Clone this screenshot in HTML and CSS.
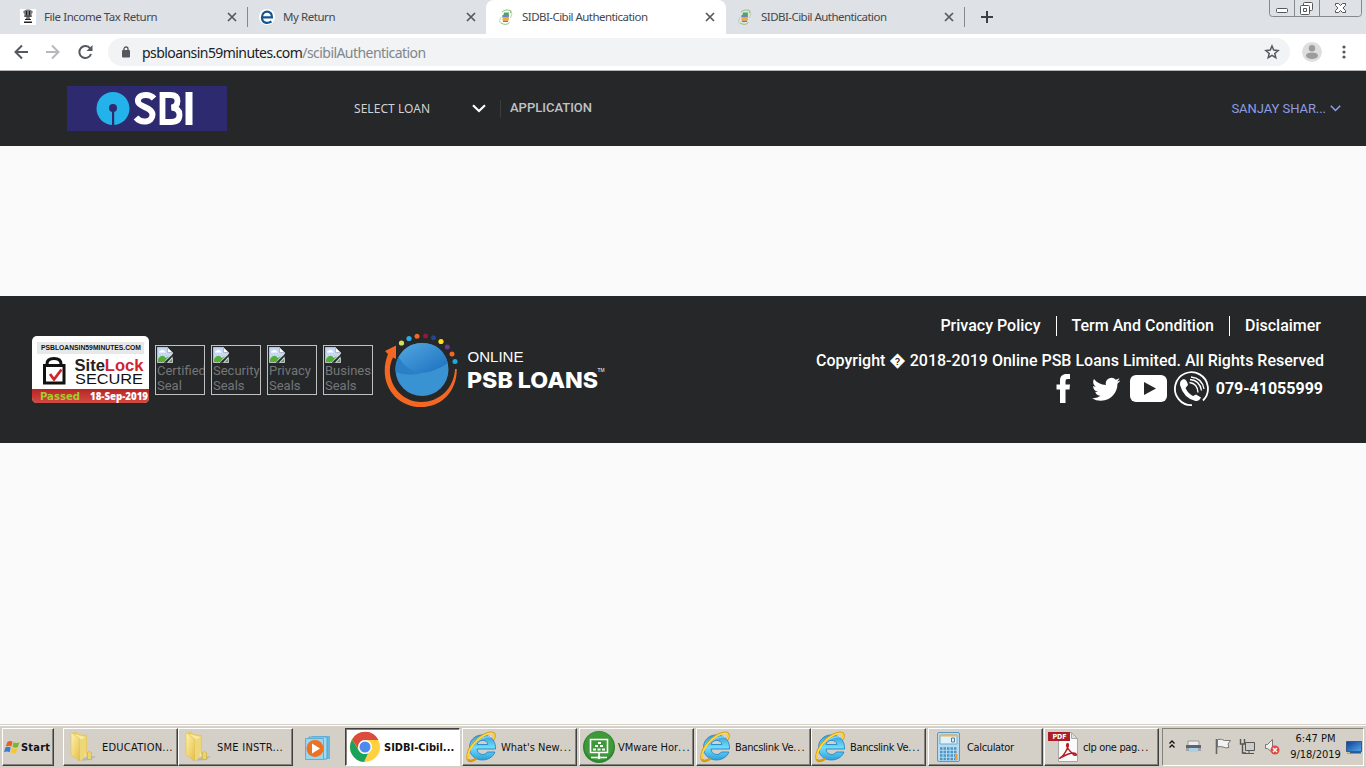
FILE: index.html
```html
<!DOCTYPE html>
<html lang="en">
<head>
<meta charset="utf-8">
<title>SIDBI-Cibil Authentication</title>
<link rel="stylesheet" href="styles.css">
</head>
<body>
<svg class="defs" width="0" height="0">
  <defs>
    <linearGradient id="folderGrad" x1="0" y1="0" x2="1" y2="1"><stop offset="0" stop-color="#fff3a8"/><stop offset="1" stop-color="#e3bd4b"/></linearGradient>
    <linearGradient id="ieGrad" x1="0" y1="0" x2="0" y2="1"><stop offset="0" stop-color="#2f9bd8"/><stop offset=".5" stop-color="#72dcfb"/><stop offset="1" stop-color="#2ba2dd"/></linearGradient>
    <linearGradient id="redGrad" x1="0" y1="0" x2="0" y2="1"><stop offset="0" stop-color="#b92625"/><stop offset="1" stop-color="#d14a42"/></linearGradient>
    <linearGradient id="blueGrad" x1="0" y1="0" x2="1" y2="1"><stop offset="0" stop-color="#53a8e2"/><stop offset="1" stop-color="#1b6fbd"/></linearGradient>
    <linearGradient id="screenGrad" x1="0" y1="0" x2="1" y2="1"><stop offset="0" stop-color="#0c3f94"/><stop offset="1" stop-color="#55a8ea"/></linearGradient>
    <symbol id="close" viewBox="0 0 10 10"><path d="M1 1l8 8M9 1L1 9" stroke="#55585c" stroke-width="1.700" fill="none"/></symbol>
    <symbol id="sidbi" viewBox="0 0 16 16">
      <path d="M4 3Q7 0 12.500 1.500L12.500 4M11.500 13.500Q8 17 3 14" fill="none" stroke="#8fc079" stroke-width="1"/>
      <path d="M3.500 8Q0 12 3 14.500M13 1.500Q15 5 12.500 9" fill="none" stroke="#b9d8a8" stroke-width="1"/>
      <path d="M6 3.500h5l-.3 2.500H5.500z" fill="#4ea469"/><path d="M4.500 6h6.500l-.2 2H4.200z" fill="#6b86bd"/><path d="M4.500 8H11l-.3 3.700H4.500z" fill="#f4ab34"/><path d="M5 11.700h5v1.300H5z" fill="#6c7db5"/>
    </symbol>
    <symbol id="broken" viewBox="0 0 16 16">
      <path d="M.5.5h10l5 5v10H.500z" fill="#c4d8f5"/><path d="M2 5.500q0-2 2-2 1-1.500 2.500 0 2 0 2 2z" fill="#fff"/>
      <path d="M1 15v-3q4-6 8-1l3-2-5 6z" fill="#55ad36"/><path d="M7 15.500L16 7v2l-6 6.500z" fill="#252729"/><path d="M11 15.500l5-4.500v4.500z" fill="#55ad36"/>
      <path d="M.5 15.500V.5h10l5 5V7M7 15.500H.500M15.500 11v4.500h-5" fill="none" stroke="#bcbec0"/><path d="M10.500.5v5h5z" fill="#fff" stroke="#b6b8ba"/>
    </symbol>
    <symbol id="folder" viewBox="0 0 32 32">
      <path d="M20 26l9-1-5 4-14 1z" fill="#8d887d" opacity=".35"/>
      <path d="M5 2l4-1.500 2 2.500 9 1v20l-8 4-7-3z" fill="#e6c962"/><path d="M7 3l12 3v19H9z" fill="#f8e9a1"/>
      <path d="M4 1.500L13 8v22L4 24z" fill="url(#folderGrad)" stroke="#dfbd56" stroke-width=".6"/><path d="M13 9l6-3v15l-3 7-3 2z" fill="#eed779"/><path d="M20.500 21.500q2-2 4 0v7h-4z" fill="#edd36b" stroke="#cfa939" stroke-width=".6"/>
    </symbol>
    <symbol id="ie" viewBox="0 0 32 32">
      <path d="M29.500 18H11c.4 6 8 7.200 10.300 3h7.600C25 32.500 3.500 32 3.500 16.500 3.500-.5 30.500-.5 29.500 18zM11.200 13.500h10.700c-.6-5.500-9.800-5.500-10.700 0z" fill="url(#ieGrad)" stroke="#2587c5" stroke-width=".9"/>
      <path d="M7 13C12 9 18 5 25 6" stroke="#b9f0ff" stroke-width="1.500" fill="none" opacity=".6"/>
      <path d="M27.500 8.500C32-2 20.500 1 11.500 8.500 3 16 .5 24 2 28.500c1 2.500 5 1.500 8.500-1" fill="none" stroke="#d79c17" stroke-width="2.600"/>
      <path d="M27.500 8C31-1 20.500 1.500 11.700 8.700 3.500 16 1 24 2.300 28" fill="none" stroke="#ffdc48" stroke-width="1.500"/>
    </symbol>
  </defs>
</svg>

<header class="tabstrip">
  <div class="tab">
    <svg class="favicon" viewBox="0 0 16 16"><path d="M0 0h16v16H0z" fill="#fff"/><path d="M4 2q1-2 4-1.500Q11 0 12 2l1 1-1.500 2 .5 3H9.500l1 2.500h-5l1-2.500H4l.5-3L3 3z" fill="#777"/><path d="M6 2h1v4H6zM9 2h1v4H9zM5 10h6v1H5zM4 12.500h8V14H4z" fill="#222"/><path d="M5 7h6" stroke="#333"/></svg>
    <span class="tab-title">File Income Tax Return</span><svg class="close"><use href="#close"/></svg>
  </div>
  <div class="tab">
    <svg class="favicon" viewBox="0 0 16 16"><circle cx="8" cy="8" r="8" fill="#fff"/><path d="M3 8.300h10C13.500 1 3 .5 3 8.300c0 6.700 6 6.200 9.500 4.200" fill="none" stroke="#14568e" stroke-width="2.200"/></svg>
    <span class="tab-title">My Return</span><svg class="close"><use href="#close"/></svg>
  </div>
  <div class="tab tab-active">
    <svg class="favicon"><use href="#sidbi"/></svg>
    <span class="tab-title tight">SIDBI-Cibil Authentication</span><svg class="close"><use href="#close"/></svg>
  </div>
  <div class="tab tab-last">
    <svg class="favicon"><use href="#sidbi"/></svg>
    <span class="tab-title tight">SIDBI-Cibil Authentication</span><svg class="close"><use href="#close"/></svg>
  </div>
  <svg class="newtab" viewBox="0 0 12 12"><path d="M6 0v12M0 6h12" stroke="#3c4043" stroke-width="2"/></svg>
  <svg class="wincontrols" width="94" height="18" viewBox="0 0 94 18">
    <path d="M.5 0v13.500q0 3 3 3h86q3 0 3-3V0M25.500 0v16.500M50.500 0v16.500" fill="none" stroke="#85898d"/>
    <g fill="#fff" stroke="#55585b"><rect x="7.500" y="8.500" width="11" height="4" rx="1"/><rect x="34.500" y="2.500" width="9" height="8" rx="1"/><rect x="31.500" y="5.500" width="9" height="9" rx="1"/><path d="M34.500 8.500h3v3h-3z"/>
    <path d="M66.500 3.500h3l2 2 2-2h3v2l-2.500 2.500 2.500 2.500v2h-3l-2-2-2 2h-3v-2L69 8l-2.500-2.500z"/></g>
  </svg>
</header>

<div class="toolbar">
  <svg class="nav" width="80" height="20" viewBox="0 0 80 20" fill="none" stroke-width="2">
    <path d="M14 10H1.500M8 3.500L1.500 10 8 16.500" stroke="#55585c"/><path d="M32 10h12.500M38 3.500l6.500 6.500-6.500 6.500" stroke="#b6b8bb"/>
    <path d="M76.200 6.500A6 6 0 1 0 77 12" stroke="#55585c"/><path d="M78.500 3v6h-6z" fill="#55585c"/>
  </svg>
  <div class="omnibox">
    <svg class="lock" width="8" height="12" viewBox="0 0 8 12"><rect y="4" width="8" height="7.500" rx="1" fill="#55585c"/><path d="M2 4.500V3a2 2 0 0 1 4 0v1.500" fill="none" stroke="#55585c" stroke-width="1.300"/></svg>
    <span class="url">psbloansin59minutes.com<span class="path">/scibilAuthentication</span></span>
    <svg class="star" width="16" height="16" viewBox="0 0 16 16"><path d="M8 2l1.700 4.100 4.400.4-3.300 2.900 1 4.300L8 11.400l-3.800 2.300 1-4.300L1.900 6.500l4.400-.4z" fill="none" stroke="#55585c" stroke-width="1.500"/></svg>
  </div>
  <svg class="avatar" width="20" height="20" viewBox="0 0 20 20"><circle cx="10" cy="10" r="10" fill="#dedede"/><circle cx="10" cy="6.200" r="3.200" fill="#9c9c9c"/><ellipse cx="10" cy="13.700" rx="6" ry="3.300" fill="#9c9c9c"/></svg>
  <svg class="dots" width="4" height="14" viewBox="0 0 4 14" fill="#55585c"><circle cx="2" cy="2" r="1.600"/><circle cx="2" cy="7" r="1.600"/><circle cx="2" cy="12" r="1.600"/></svg>
</div>

<nav class="sitebar">
  <svg class="sbi" width="160" height="45" viewBox="0 0 160 45">
    <path d="M0 0h160v45H0z" fill="#2d2a70"/><circle cx="46" cy="22.500" r="16.500" fill="#23b3ea"/><circle cx="46" cy="22" r="4" fill="#2d2a70"/><path d="M45 24h2.200v16H45z" fill="#2d2a70"/>
    <g fill="none" stroke="#fff"><path d="M87 12.500Q84 9 79 9c-6 0-8.500 3-8 6.500.5 5.500 14.500 6 14.500 13 0 8.500-11.500 9-16.500 3" stroke-width="6"/><path d="M95.500 9h8q7 0 7 6 0 5.500-6 6.500 8 .5 8 7.500T104 36h-8.500z" stroke-width="5.800"/><path d="M122 6v33" stroke-width="7"/></g>
  </svg>
  <span class="select-loan">SELECT LOAN</span>
  <svg class="chev" width="14" height="9" viewBox="0 0 14 9"><path d="M1 1.300l6 5.700 6-5.700" fill="none" stroke="#fff" stroke-width="2.200"/></svg>
  <span class="application">APPLICATION</span>
  <span class="user">SANJAY SHAR...</span>
  <svg width="11" height="7" viewBox="0 0 11 7"><path d="M.8.800l4.700 4.700L10.200.8" fill="none" stroke="#93a0e4" stroke-width="1.500"/></svg>
</nav>

<main class="gap"></main>

<footer class="footer">
  <div class="seals">
    <svg width="117" height="67" viewBox="0 0 117 67">
      <rect width="117" height="67" rx="5" fill="#fff"/><path d="M5 6h107v12H5z" fill="#e8e8e8"/>
      <text class="seal-site" x="9" y="13.500" textLength="100" lengthAdjust="spacingAndGlyphs">PSBLOANSIN59MINUTES.COM</text>
      <path d="M15 30v-2q0-5.500 7-5.500t7 5.500v2" fill="none" stroke="#111" stroke-width="3"/><rect x="12.500" y="29.500" width="19.500" height="17.500" fill="#fff" stroke="#111" stroke-width="3"/><path d="M18 38l4 5.500 7.500-10" fill="none" stroke="#d3232b" stroke-width="2.800"/>
      <text class="seal-name" x="42.500" y="34.500" textLength="69" lengthAdjust="spacingAndGlyphs">Site<tspan fill="#cf2630">Lock</tspan></text>
      <text class="seal-secure" x="43" y="48" textLength="68" lengthAdjust="spacingAndGlyphs">SECURE</text>
      <path d="M0 53h117v9q0 5-5 5H5q-5 0-5-5z" fill="url(#redGrad)"/>
      <text class="seal-passed" x="8" y="64" textLength="40" lengthAdjust="spacingAndGlyphs">Passed</text><text class="seal-date" x="58" y="64" textLength="58" lengthAdjust="spacingAndGlyphs">18-Sep-2019</text>
    </svg>
    <div class="missing"><svg><use href="#broken"/></svg><span>Certified Seal</span></div>
    <div class="missing"><svg><use href="#broken"/></svg><span>Security Seals</span></div>
    <div class="missing"><svg><use href="#broken"/></svg><span>Privacy Seals</span></div>
    <div class="missing"><svg><use href="#broken"/></svg><span>Business Seals</span></div>
    <svg class="psb" width="226" height="76" viewBox="-1 0 226 76">
      <circle cx="38" cy="36.500" r="26.500" fill="#3993d3"/><path d="M14 25Q22 10 38 10q20 0 26 20-14 10-30 10Q16 36 14 25z" fill="url(#blueGrad)"/><path d="M14.500 24q9 15 24 16-15 4-27-1-1-8 3-15z" fill="#2b80c5"/>
      <path d="M1 18L12 12.500l0 13.500-3-1.500C-1 44 14 69 37 69c18 0 33-13 34-33l1.800 0C73 58 58 74 37 74 11 74-7 49 4 21z" fill="#f26722"/>
      <circle cx="17.500" cy="10" r="2.600" fill="#d4e156"/><circle cx="25" cy="5.500" r="2.600" fill="#2caae2"/><circle cx="33" cy="3.200" r="2.500" fill="#f26722"/><circle cx="41.500" cy="3" r="2.500" fill="#8f1942"/><circle cx="49.500" cy="4.800" r="2.500" fill="#21478f"/><circle cx="57" cy="8.500" r="2.600" fill="#ffdd1a"/><circle cx="63.300" cy="14" r="2.500" fill="#653995"/><circle cx="68" cy="21" r="2.500" fill="#f26722"/><circle cx="71" cy="28.500" r="2.500" fill="#20a9e0"/>
      <text class="psb-online" x="83.500" y="28.500" textLength="56" lengthAdjust="spacingAndGlyphs">ONLINE</text><text class="psb-name" x="83" y="54.500" textLength="131" lengthAdjust="spacingAndGlyphs">PSB LOANS</text><text class="psb-tm" x="213.500" y="38.500" textLength="7" lengthAdjust="spacingAndGlyphs">TM</text>
    </svg>
  </div>
  <div class="legal">
    <div class="links"><span>Privacy Policy</span><span>Term And Condition</span><span>Disclaimer</span></div>
    <div class="copyright">Copyright &#xFFFD; 2018-2019 Online PSB Loans Limited. All Rights Reserved</div>
    <div class="social">
      <svg width="154" height="36" viewBox="0 0 154 36" fill="#fff">
        <path d="M4 32V18.500H.5v-5H4V10c0-5 2.500-7 6.500-7H14v5h-2.500Q9.500 8 9.500 10v3.500H14l-.5 5h-4V32z"/>
        <path transform="translate(36 4.200) scale(1.180)" d="M23.950 4.570a10 10 0 0 1-2.820.770 4.950 4.950 0 0 0 2.160-2.720c-.95.550-2 .950-3.130 1.180a4.920 4.920 0 0 0-8.380 4.480C7.690 8.090 4.070 6.130 1.640 3.160a4.920 4.920 0 0 0 1.520 6.570 4.900 4.900 0 0 1-2.230-.61v.06a4.920 4.920 0 0 0 3.950 4.830 5 5 0 0 1-2.210.08 4.940 4.940 0 0 0 4.600 3.420A9.870 9.870 0 0 1 0 19.540a13.990 13.990 0 0 0 7.550 2.210c9.050 0 14-7.500 14-13.980l-.02-.63a9.900 9.900 0 0 0 2.420-2.570z"/>
        <rect x="74" y="4" width="37" height="27" rx="6"/><path d="M88 11l12 6.500L88 24z" fill="#252729"/>
        <path d="M136 34.200A16.500 16.500 0 1 1 147 29.500" fill="none" stroke="#fff" stroke-width="1.800"/>
        <path d="M128 8q3 1 4 6l-2.500 3q2.500 5.500 7.500 8l3-1.500 5 3q-2 4-5.500 3.500-12-3-15.500-16-.5-5 4-6z"/><path d="M133.500 11.500q8 1 8.500 10M134 8.500q10 1 11.500 11M135 6q11 1 13 12" fill="none" stroke="#fff" stroke-width="1.300"/>
      </svg>
      <span class="phone">079-41055999</span>
    </div>
  </div>
</footer>

<section class="blank"></section>

<div class="taskbar">
  <div class="start"><svg width="16" height="15" viewBox="0 0 15 14"><path d="M3 2q2.500-2 5-.5L7 6Q4.500 4.500 1.700 6z" fill="#ee5b26"/><path d="M9 2q2.500 1.500 5.500 0L13 6.500q-2.500 1.500-5-.2z" fill="#78b929"/><path d="M1.300 7q2.500-1.500 5 0l-1 4.500Q3 10 0 11.500z" fill="#397fc8"/><path d="M7.500 7.500q2.500 1.500 5.200 0l-1.300 4.500q-2.500 1.500-5-.2z" fill="#f7c72d"/></svg><span>Start</span></div>
  <div class="task first"><svg><use href="#folder"/></svg><span class="folder-label">EDUCATION...</span></div>
  <div class="task snug"><svg><use href="#folder"/></svg><span class="folder-label">SME INSTR...</span></div>
  <svg class="player" width="29" height="27" viewBox="0 0 29 27"><path d="M7 1h18v23H7z" fill="#68b8df"/><path d="M4 2h18v22H4z" fill="#a5d9ef" stroke="#55a5cf"/><path d="M.5 3.500h18v21H.5z" fill="#9bd4ef" stroke="#67acd1"/><circle cx="10" cy="13.500" r="8.500" fill="#ee7021"/><path d="M7 8.500l8 5-8 5z" fill="#fff"/></svg>
  <div class="task current"><svg viewBox="0 0 32 32"><circle cx="16" cy="16" r="15" fill="#ffd13e"/><path d="M3 8.500A15 15 0 0 1 29.500 9H16a7 7 0 0 0-6 10z" fill="#dd4b3e"/><path d="M3 8.500l6.800 11A7 7 0 0 0 19 22.300l-4 8.700A15 15 0 0 1 3 8.500z" fill="#1aa35f"/><circle cx="16" cy="16" r="7" fill="#fff"/><circle cx="16" cy="16" r="5.500" fill="#4c89f1"/></svg><span>SIDBI-Cibil...</span></div>
  <div class="task"><svg><use href="#ie"/></svg><span>What's New<i>...</i></span></div>
  <div class="task"><svg viewBox="0 0 32 32"><circle cx="16" cy="16" r="16" fill="#2f8532"/><circle cx="16" cy="15" r="14.500" fill="#3f983a"/><path d="M7.500 8.500h17v13h-17zM16 22v4M8 26.500h6M18 26.500h6" fill="none" stroke="#fff" stroke-width="1.600"/><circle cx="16" cy="26.500" r="1.800" fill="#fff"/><path d="M15 11h3v2h-3zM12 14h3v2h-3zM17 14h3v2h-3zM10 17.500h3v2h-3zM14.500 17.500h3v2h-3zM19 17.500h3v2h-3z" fill="#fff"/></svg><span>VMware Hor<i>...</i></span></div>
  <div class="task"><svg><use href="#ie"/></svg><span class="narrow">Bancslink Ve<i>...</i></span></div>
  <div class="task snug"><svg><use href="#ie"/></svg><span class="narrow">Bancslink Ve<i>...</i></span></div>
  <div class="task"><svg viewBox="0 0 32 32"><rect x="5.500" y="1.500" width="22" height="29" rx="1.500" fill="#b5dbf0" stroke="#579cc9"/><path d="M8 4h17v9H8z" fill="#dff2fb" stroke="#73a9c8"/><path d="M8 3.500h17v2H8z" fill="#f3b34f"/><path d="M19.500 7h3v4h-3z" fill="none" stroke="#537c9b"/><path d="M8 17.500h17M8 21h17M8 24.500h17M8 28h17" stroke="#4e94c5" stroke-width="2.300" stroke-dasharray="2.500 1"/><path d="M23 23h2.500v6H23z" fill="#f49a32"/></svg><span class="narrow">Calculator</span></div>
  <div class="task pdf"><svg viewBox="0 0 32 32"><path d="M10.500 1.500h13l6 6v23h-19z" fill="#fafafa" stroke="#a7a7a7"/><path d="M23.500 1.500v6h6z" fill="#ddd" stroke="#aaa"/><path d="M0 1h22v9H0z" fill="#aa1f26"/><text class="pdf-text" x="4.500" y="8.300" textLength="14">PDF</text><path d="M12 27q4-2 8-11 1-4-1-3-2 3 7 11 3 1 2-1-3-3-14 3-3 2-2 1z" fill="none" stroke="#b31c23" stroke-width="1.500"/></svg><span class="narrow">clp one pag<i>...</i></span></div>
  <div class="tray">
    <svg width="114" height="22" viewBox="0 0 114 22">
      <path d="M1.500 7.500L4 5l2.500 2.500M1.500 11.500L4 9l2.500 2.500" fill="none" stroke="#111" stroke-width="1.300"/>
      <path d="M20 5h11v5H20z" fill="#ededed" stroke="#999"/><path d="M18 9h15v6H18z" fill="#5f646b"/><path d="M18 12h15v3H18z" fill="#a0a4a8"/><path d="M21 12h9v4H21z" fill="#aad0e8"/>
      <path d="M48.500 3v15" stroke="#666" stroke-width="1.600"/><path d="M49.500 3.500q4-1 7 1h6L60 8l1 3.500q-3.500 1-6-.5-3-1-5.500 0z" fill="#f2f2f2" stroke="#777"/>
      <path d="M77.500 6.500h9v8h-9zM75 17.500h11M81 14v3" fill="#ccc" stroke="#555"/><path d="M72.500 3v5h4V3M74.500 8v9H78" fill="none" stroke="#555" stroke-width="1.400"/>
      <path d="M97.500 8.500h2l5-5v13l-5-4h-2z" fill="#eee" stroke="#777"/><circle cx="107" cy="14" r="4.500" fill="#e14b46"/><path d="M105 12l4 4M109 12l-4 4" stroke="#fff" stroke-width="1.400"/>
    </svg>
    <div class="clock"><span>6:47 PM</span><span>9/18/2019</span></div>
    <svg width="16" height="13" viewBox="0 0 16 13"><path d="M.5.500h15v10H.5z" fill="url(#screenGrad)" stroke="#315d91"/><path d="M1 11h14v1.500H1z" fill="#245b99"/><path d="M1 11h3v1.500H1z" fill="#edb84d"/></svg>
  </div>
</div>
</body>
</html>
```

FILE: styles.css
```css
* { box-sizing: border-box; }
body { margin: 0; width: 1366px; height: 768px; overflow: hidden; display: flex; flex-direction: column; background: #fafafa; font-family: Roboto, sans-serif; }
svg { display: block; flex: none; }
.defs { height: 0; }
span { white-space: nowrap; }

.tabstrip { height: 34px; flex: none; display: flex; padding-left: 8px; background: #dee1e6; font: 12px "Noto Sans", sans-serif; color: #45484c; }
.tab { width: 239px; height: 34px; display: flex; align-items: center; padding: 0 10px 0 12px; }
.tab-title { flex: 1; margin-left: 8px; padding-bottom: 2px; font-size: 11.5px; letter-spacing: -0.44px; }
.tab-title.tight { letter-spacing: -0.54px; }
.tab:first-child { width: 240px; margin-right: -1px; padding-right: 11px; }
.tab:first-child, .tab-last { background: linear-gradient(#85888c, #85888c) right center / 1px 20px no-repeat; }
.tab-last { width: 240px; padding-right: 11px; }
.tab-active { width: 240px; margin-right: -1px; padding-right: 11px; background: #fff; border-radius: 8px 8px 0 0; }
.favicon { width: 16px; height: 16px; }
.close { width: 10px; height: 10px; }
.newtab { width: 12px; height: 12px; margin: 11px 0 0 16px; }
.wincontrols { margin: 0 3px 0 auto; }

.toolbar { height: 37px; flex: none; display: flex; align-items: center; padding: 0 20px 0 14px; background: #fff; border-bottom: 1px solid #b5b5b5; }
.omnibox { width: 1182px; height: 28px; margin-left: 14px; display: flex; align-items: center; padding: 0 10px 0 14px; background: #f1f3f4; border-radius: 14px; }
.url { flex: 1; margin-left: 12px; font: 14px "Noto Sans", sans-serif; letter-spacing: -0.56px; color: #202124; }
.path { color: #80868b; }
.avatar { margin-left: 12px; }
.dots { margin-left: auto; }

.sitebar { height: 75px; flex: none; display: flex; align-items: center; padding: 0 25px 0 67px; background: #252729; color: #d0d2d4; font-size: 13px; }
.select-loan { width: 118px; margin-left: 127px; font: 12px "Noto Sans", sans-serif; letter-spacing: 0.05px; }
.application { height: 18px; line-height: 16px; margin-left: 14px; padding-left: 9px; border-left: 1px solid #3a3c3f; font-weight: 500; color: #c0c3c6; }
.user { margin: 0 4px 0 auto; letter-spacing: -0.05px; color: #8f9de0; }

.gap { height: 150px; flex: none; }
.footer { height: 147px; flex: none; display: flex; justify-content: space-between; padding-left: 32px; background: #252729; color: #fff; }
.seals { height: 147px; display: flex; align-items: center; gap: 6px; }
.missing { width: 50px; height: 50px; padding: 1px; overflow: hidden; border: 1px solid #c0c0c0; color: #747678; font-size: 13px; line-height: 15px; }
.missing svg { width: 16px; height: 16px; }
.missing span { display: block; white-space: normal; }
.psb { margin: 2px 0 0 4px; }
.seal-site { font: 900 7px "Liberation Sans", sans-serif; fill: #111; }
.seal-name { font: 700 17px "Liberation Sans", sans-serif; fill: #222; }
.seal-secure { font: 15px "Liberation Sans", sans-serif; fill: #111; }
.seal-passed { font: 700 11px "DejaVu Sans", sans-serif; fill: #a7cb2d; }
.seal-date { font: 800 10px "Open Sans", sans-serif; fill: #fff; }
.psb-online { font: 15px "Liberation Sans", sans-serif; fill: #fff; }
.psb-name { font: 800 22px Inter, sans-serif; fill: #fff; }
.psb-tm { font: 5px "Liberation Sans", sans-serif; fill: #fff; }
.legal { display: flex; flex-direction: column; align-items: flex-end; padding: 20px 42px 0 0; font-size: 16px; font-weight: 500; line-height: 20px; }
.links { display: flex; margin-right: 3px; }
.links span + span { margin-left: 15px; padding-left: 15px; border-left: 1px solid #fff; }
.copyright { margin-top: 15px; }
.social { display: flex; align-items: center; gap: 6px; }
.phone { margin-right: 1px; font-weight: 700; }

.blank { flex: 1; }
.taskbar { height: 44px; flex: none; display: flex; padding: 3px 2px 0; background: #d4d0c8; border-top: 1px solid #d4d0c8; box-shadow: inset 0 1px #fff; font: 11px "DejaVu Sans Condensed", sans-serif; color: #111; }
.taskbar i { font-style: normal; letter-spacing: 1px; }
.start, .task { height: 38px; display: flex; align-items: center; border: 1px solid; border-color: #fff #404040 #404040 #fff; box-shadow: inset -1px -1px #85827c; }
.start { width: 52px; padding-left: 1px; font-weight: 700; gap: 1px; letter-spacing: 0.2px; }
.task { width: 115px; flex: none; margin-left: 2px; padding-left: 3px; }
.task svg { width: 32px; height: 32px; }
.task span { margin-left: 3px; }
.task .narrow { letter-spacing: -0.35px; }
.task.first { margin-left: 9px; }
.task.snug { margin-left: 0; }
.task.pdf { margin-left: 1px; }
.task .folder-label { letter-spacing: 0.25px; }
.player { margin: 7px 0 0 12px; }
.task.current { margin-left: 11px; background: #fff; border-color: #404040 #fff #fff #404040; box-shadow: inset 1px 1px #85827c; font-weight: 700; }
.pdf-text { font: 700 7px "DejaVu Sans Condensed", sans-serif; fill: #fff; }
.tray { width: 202px; height: 38px; margin-left: auto; display: flex; align-items: center; padding: 0 0 0 5px; border: 1px solid; border-color: #85827c #fff #fff #85827c; }
.clock { width: 64px; padding-left: 3px; display: flex; flex-direction: column; align-items: center; line-height: 16px; }
```
